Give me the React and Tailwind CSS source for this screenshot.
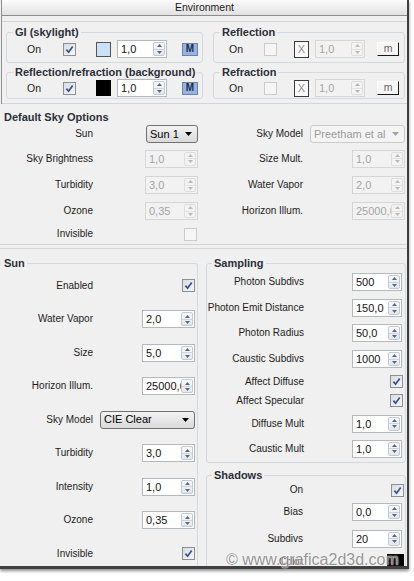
import React from 'react'

function Arrows({ disabled }) {
  const fill = disabled ? '#b9b9b9' : '#59687c'
  return (
    <div
      className={`my-[1px] mr-[1px] flex w-[12px] shrink-0 flex-col rounded-[2px] border ${
        disabled ? 'border-[#dddddd] bg-[#f3f3f3]' : 'border-[#c2cbd5] bg-gradient-to-b from-[#f8fafc] to-[#e2e8ee]'
      }`}>
      <div className={`flex flex-1 items-center justify-center border-b ${disabled ? 'border-[#e3e3e3]' : 'border-[#ced5dd]'}`}>
        <svg width="5" height="3" viewBox="0 0 5 3"><path d="M0 3L2.5 0L5 3Z" fill={fill} /></svg>
      </div>
      <div className="flex flex-1 items-center justify-center">
        <svg width="5" height="3" viewBox="0 0 5 3"><path d="M0 0L5 0L2.5 3Z" fill={fill} /></svg>
      </div>
    </div>
  )
}

function Spinner({ value, disabled, wide, className = '' }) {
  return (
    <div
      className={`flex h-[18px] ${wide ? 'w-[53px]' : 'w-[50px]'} border ${className} ${
        disabled ? 'border-[#d6d6d6] bg-[#f2f2f2] text-[#a5a5a5]' : 'border-[#b4b8bf] bg-white text-[#141414]'
      }`}>
      <span className="min-w-0 flex-1 overflow-hidden whitespace-nowrap pl-[3px] text-[11px] leading-[16px]">{value}</span>
      <Arrows disabled={disabled} />
    </div>
  )
}

function Check({ checked, disabled, className = '' }) {
  return (
    <div
      className={`flex h-[13px] w-[13px] items-center justify-center border ${className} ${
        disabled ? 'border-[#cbcbcb] bg-[#f6f6f6]' : 'border-[#8e8f8f] bg-gradient-to-br from-[#d6dbe3] to-[#f8f8fa]'
      }`}>
      {checked && (
        <svg width="9" height="9" viewBox="0 0 9 9">
          <path d="M1.4 4.6L3.6 7.2L7.7 1.4" fill="none" stroke="#3a4f92" strokeWidth="1.7" />
        </svg>
      )}
    </div>
  )
}

function Combo({ value, disabled, className = '' }) {
  return (
    <div
      className={`flex h-[18px] items-center rounded-[3px] border ${className} ${
        disabled
          ? 'border-[#cacaca] bg-[#f4f4f4] text-[#9c9c9c]'
          : 'border-[#707070] bg-gradient-to-b from-[#f3f3f3] to-[#dadada] text-black'
      }`}>
      <span className="min-w-0 flex-1 overflow-hidden whitespace-nowrap pl-[3px] text-[11px] leading-none">{value}</span>
      <svg width="7" height="4" viewBox="0 0 7 4" className="mr-[5px] shrink-0">
        <path d="M0 0H7L3.5 4Z" fill={disabled ? '#a3a3a3' : '#000'} />
      </svg>
    </div>
  )
}

function Group({ title, className = '', legend = 'ml-[6px]', children }) {
  return (
    <fieldset className={`rounded-[3px] border border-[#d3d9de] ${className}`}>
      <legend className={`${legend} px-[2px] text-[11px] font-bold leading-[12px] text-[#2b2f38]`}>{title}</legend>
      {children}
    </fieldset>
  )
}

function Label({ children, w }) {
  return <span className={`${w} shrink-0 whitespace-nowrap text-right text-[10px] leading-none text-[#1c1c1c]`}>{children}</span>
}

const SKY = [
  { h: 'h-[22px]', l: 'Sun', lc: <Combo value="Sun 1" className="w-[52px]" />, r: 'Sky Model', rc: <Combo value="Preetham et al" disabled className="w-[95px]" /> },
  { h: 'h-[27px]', l: 'Sky Brightness', lc: <Spinner value="1,0" disabled wide />, r: 'Size Mult.', rc: <Spinner value="1,0" disabled wide /> },
  { h: 'h-[26px]', l: 'Turbidity', lc: <Spinner value="3,0" disabled wide />, r: 'Water Vapor', rc: <Spinner value="2,0" disabled wide /> },
  { h: 'h-[26px]', l: 'Ozone', lc: <Spinner value="0,35" disabled wide />, r: 'Horizon Illum.', rc: <Spinner value="25000,0" disabled wide /> },
  { h: 'h-[20px]', l: 'Invisible', lc: <Check disabled className="mr-[1px]" />, r: null, rc: null },
]

const SUN = [
  { l: 'Enabled', c: <Check checked /> },
  { l: 'Water Vapor', c: <Spinner value="2,0" wide /> },
  { l: 'Size', c: <Spinner value="5,0" wide /> },
  { l: 'Horizon Illum.', c: <Spinner value="25000,0" wide /> },
  { l: 'Sky Model', c: <Combo value="CIE Clear" className="w-[95px]" /> },
  { l: 'Turbidity', c: <Spinner value="3,0" wide /> },
  { l: 'Intensity', c: <Spinner value="1,0" wide /> },
  { l: 'Ozone', c: <Spinner value="0,35" wide /> },
  { l: 'Invisible', c: <Check checked /> },
]

const SAMPLING = [
  { h: 'h-[26px]', l: 'Photon Subdivs', c: <Spinner value="500" /> },
  { h: 'h-[25.5px]', l: 'Photon Emit Distance', c: <Spinner value="150,0" /> },
  { h: 'h-[25.5px]', l: 'Photon Radius', c: <Spinner value="50,0" /> },
  { h: 'h-[26px]', l: 'Caustic Subdivs', c: <Spinner value="1000" /> },
  { h: 'h-[19.5px]', l: 'Affect Diffuse', c: <Check checked className="-mr-[1px]" /> },
  { h: 'h-[18.5px]', l: 'Affect Specular', c: <Check checked className="-mr-[1px]" /> },
  { h: 'h-[27px]', l: 'Diffuse Mult', c: <Spinner value="1,0" /> },
  { h: 'h-[23px]', l: 'Caustic Mult', c: <Spinner value="1,0" /> },
]

const SHADOWS = [
  { h: 'h-[18px]', l: 'On', c: <Check checked className="-mr-[2px]" /> },
  { h: 'h-[26px]', l: 'Bias', c: <Spinner value="0,0" /> },
  { h: 'h-[27px]', l: 'Subdivs', c: <Spinner value="20" /> },
  { h: 'h-[20px]', l: 'Color', c: <div className="-mr-[2px] h-[17px] w-[17px] bg-black" /> },
]

export default function App() {
  return (
    <div className="relative h-[581px] w-[414px] overflow-hidden bg-white font-['Liberation_Sans',Arial,sans-serif]">
      <div className="h-[569px] w-[409px] overflow-hidden border-b-[3px] border-r-2 border-[#3f3f3f] bg-[#f0f0f0] shadow-[0_2px_3px_rgba(0,0,0,0.45)]">
        {/* Environment */}
        <div className="ml-[1px] border-l border-[#8f8f8f]">
          <div className="h-[16px] border-b border-[#8c8c8c] bg-gradient-to-b from-[#fbfbfb] to-[#e1e1e1] text-center text-[10.5px] leading-[15px] text-[#1a1a1a]">
            Environment
          </div>
          <div className="mt-[5px] flex gap-[10px] border-y border-[#d5d5d5] pb-[4px] pl-[4px] pt-[4px]">
            <div className="flex w-[197px] flex-col">
              <Group title="GI (skylight)" className="pb-[4px]">
                <div className="mt-[2px] flex h-[18px] items-center">
                  <span className="ml-[20px] w-[36px] text-[10.5px] leading-none text-[#1c1c1c]">On</span>
                  <Check checked />
                  <div className="ml-[20px] h-[15px] w-[15px] border border-[#555] bg-[#cbe1f8]" />
                  <Spinner value="1,0" className="ml-[6px]" />
                  <div className="ml-[15px] flex h-[13px] w-[16px] items-center justify-center border border-[#6883b0] bg-[#98b3dd] text-[10px] font-bold leading-none text-[#1d2c55]">M</div>
                </div>
              </Group>
              <Group title="Reflection/refraction (background)" className="mt-[3px] pb-[1px]">
                <div className="mt-[1px] flex h-[18px] items-center">
                  <span className="ml-[20px] w-[36px] text-[10.5px] leading-none text-[#1c1c1c]">On</span>
                  <Check checked />
                  <div className="ml-[20px] h-[16px] w-[15px] bg-black" />
                  <Spinner value="1,0" className="ml-[6px]" />
                  <div className="ml-[15px] flex h-[13px] w-[16px] items-center justify-center border border-[#6883b0] bg-[#98b3dd] text-[10px] font-bold leading-none text-[#1d2c55]">M</div>
                </div>
              </Group>
            </div>
            <div className="flex w-[192px] flex-col">
              {['Reflection', 'Refraction'].map((t, i) => (
                <Group key={t} title={t} className={i === 0 ? 'pb-[4px]' : 'mt-[3px] pb-[1px]'}>
                  <div className={`${i === 0 ? 'mt-[2px]' : 'mt-[1px]'} flex h-[18px] items-center`}>
                    <span className="ml-[15px] w-[35px] text-[10.5px] leading-none text-[#1c1c1c]">On</span>
                    <Check disabled />
                    <div className="ml-[17px] flex h-[17px] w-[15px] items-center justify-center border border-[#3c3c3c] bg-[#fbfbfb] text-[11px] leading-none text-[#8f8f8f]">X</div>
                    <Spinner value="1,0" disabled className="ml-[6px]" />
                    <div className="ml-[12px] flex h-[14px] w-[22px] items-center justify-center border border-b-[#1a1a1a] border-l-[#fdfdfd] border-r-[#1a1a1a] border-t-[#fdfdfd] bg-[#f6f6f6] pb-[2px] text-[10.5px] leading-none text-[#666]">m</div>
                  </div>
                </Group>
              ))}
            </div>
          </div>
        </div>

        {/* Default Sky Options */}
        <div className="mt-[7px] pl-[4px] text-[11px] font-bold leading-[12px] text-[#2b2f38]">Default Sky Options</div>
        <div className="flex flex-col">
          {SKY.map((r) => (
            <div key={r.l} className={`flex ${r.h}`}>
              <div className="flex w-[203px] items-center pr-[5px]">
                <Label w="w-[93px]">{r.l}</Label>
                <div className="ml-auto">{r.lc}</div>
              </div>
              <div className="flex flex-1 items-center pr-[2px]">
                {r.r && <Label w="w-[100px]">{r.r}</Label>}
                <div className="ml-auto">{r.rc}</div>
              </div>
            </div>
          ))}
        </div>
        <div className="h-[5px] border-y border-[#d5d5d5]" />

        {/* Sun / Sampling / Shadows */}
        <div className="flex pt-[8px]">
          <Group title="Sun" legend="ml-[2px]" className="w-[198px] border-l-0 pr-[2px]">
            {SUN.map((r) => (
              <div key={r.l} className="flex h-[33.5px] items-center">
                <Label w="w-[93px]">{r.l}</Label>
                <div className="ml-auto">{r.c}</div>
              </div>
            ))}
          </Group>
          <div className="ml-[8px] flex w-[200px] flex-col">
            <Group title="Sampling" legend="ml-[5px]" className="pb-[2px] pr-[3px]">
              {SAMPLING.map((r) => (
                <div key={r.l} className={`flex ${r.h} items-center`}>
                  <Label w="w-[97px]">{r.l}</Label>
                  <div className="ml-auto">{r.c}</div>
                </div>
              ))}
            </Group>
            <Group title="Shadows" legend="ml-[5px]" className="mt-[6px] pr-[3px]">
              {SHADOWS.map((r) => (
                <div key={r.l} className={`flex ${r.h} items-center`}>
                  <Label w="w-[96px]">{r.l}</Label>
                  <div className="ml-auto">{r.c}</div>
                </div>
              ))}
            </Group>
          </div>
        </div>
      </div>

      <div className="pointer-events-none absolute left-[226px] top-[552px] whitespace-nowrap text-[16px] leading-none text-[#8d8d8d] opacity-90 [text-shadow:0_0_1px_#fff,0_0_2px_#fff]">
        © www.grafica2d3d.com
      </div>
    </div>
  )
}
